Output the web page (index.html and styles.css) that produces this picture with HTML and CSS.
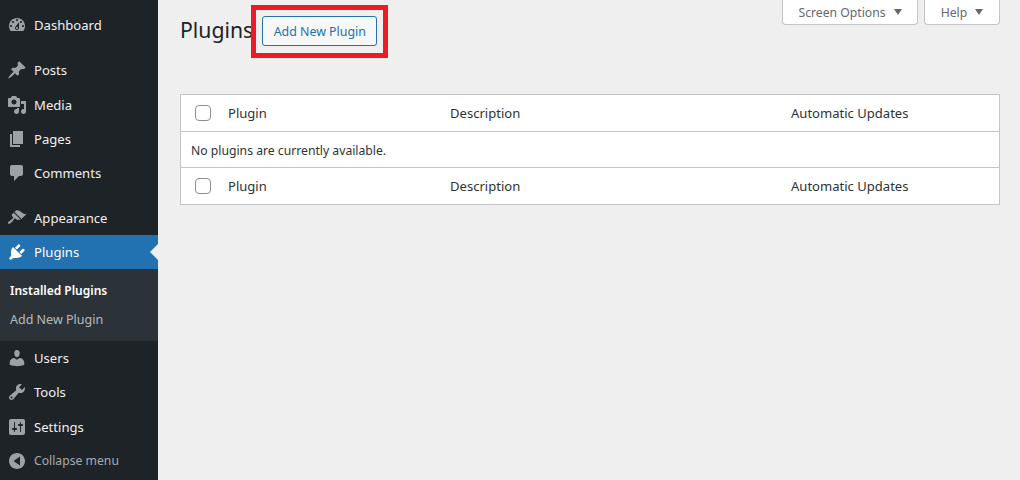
FILE: index.html
```html
<!DOCTYPE html>
<html lang="en">
<head>
    <meta charset="UTF-8">
    <meta name="viewport" content="width=device-width, initial-scale=1.0">
    <title>Plugins</title>
    <link rel="stylesheet" href="styles.css">
</head>
<body>
    <nav class="sidebar">
        <a class="menu-item"><svg class="menu-icon" viewBox="0 0 20 20"><path d="M3.76 16h12.48c1.1-1.37 1.76-3.11 1.76-5 0-4.42-3.58-8-8-8s-8 3.58-8 8c0 1.89.66 3.63 1.76 5zM10 4c.55 0 1 .45 1 1s-.45 1-1 1-1-.45-1-1 .45-1 1-1zM6 6c.55 0 1 .45 1 1s-.45 1-1 1-1-.45-1-1 .45-1 1-1zm8 0c.55 0 1 .45 1 1s-.45 1-1 1-1-.45-1-1 .45-1 1-1zm-5.37 5.55L12 7v6c0 1.1-.9 2-2 2s-2-.9-2-2c0-.57.24-1.08.63-1.45zM4 10c.55 0 1 .45 1 1s-.45 1-1 1-1-.45-1-1 .45-1 1-1zm12 0c.55 0 1 .45 1 1s-.45 1-1 1-1-.45-1-1 .45-1 1-1zm-5 3c0-.55-.45-1-1-1s-1 .45-1 1 .45 1 1 1 1-.45 1-1z"/></svg>Dashboard</a>
        <div class="menu-sep"></div>
        <a class="menu-item"><svg class="menu-icon" viewBox="0 0 20 20"><path d="M10.44 3.02l1.82-1.82 6.36 6.35-1.83 1.82c-1.05-.68-2.48-.57-3.41.36l-.75.75c-.92.93-1.04 2.35-.35 3.41l-1.83 1.82-2.41-2.41-2.8 2.79c-.42.42-3.38 2.71-3.8 2.29s1.86-3.39 2.28-3.81l2.79-2.79L4.1 9.36l1.83-1.82c1.05.69 2.48.57 3.4-.36l.75-.75c.93-.92 1.05-2.35.36-3.41z"/></svg>Posts</a>
        <a class="menu-item"><svg class="menu-icon" viewBox="0 0 20 20"><path d="M13 11V4c0-.55-.45-1-1-1h-1.67L9 1H5L3.67 3H2c-.55 0-1 .45-1 1v7c0 .55.45 1 1 1h10c.55 0 1-.45 1-1zM7 4.5c1.38 0 2.5 1.12 2.5 2.5S8.38 9.5 7 9.5 4.5 8.38 4.5 7 5.62 4.5 7 4.5zM14 6h5v10.5c0 1.38-1.12 2.5-2.5 2.5S14 17.88 14 16.5s1.12-2.5 2.5-2.5c.17 0 .34.02.5.05V9h-3V6zm-4 8.05V13h2v3.5c0 1.38-1.12 2.5-2.5 2.5S7 17.88 7 16.5 8.12 14 9.5 14c.17 0 .34.02.5.05z"/></svg>Media</a>
        <a class="menu-item"><svg class="menu-icon" viewBox="0 0 20 20"><path d="M6 15V2h10v13H6zm-1 1h8v2H3V5h2v11z"/></svg>Pages</a>
        <a class="menu-item"><svg class="menu-icon" viewBox="0 0 20 20"><path d="M5 2h9c1.1 0 2 .9 2 2v7c0 1.1-.9 2-2 2h-2l-5 5v-5H5c-1.1 0-2-.9-2-2V4c0-1.1.9-2 2-2z"/></svg>Comments</a>
        <div class="menu-sep second"></div>
        <a class="menu-item"><svg class="menu-icon" viewBox="0 0 20 20"><path d="M14.48 11.06L7.41 3.99l1.5-1.5c.5-.56 2.3-.47 3.51.32 1.21.8 1.43 1.28 2.91 2.1 1.18.64 2.45 1.26 4.45.85zm-.71.71L6.7 4.7 4.93 6.47c-.39.39-.39 1.02 0 1.41l1.06 1.06c.39.39.39 1.03 0 1.42-.6.6-1.43 1.11-2.21 1.69-.35.26-.7.53-1.01.84C1.43 13.23.4 14.93 1.1 15.63c.7.7 2.4-.33 3.74-1.67.31-.31.58-.66.85-1.01.58-.78 1.09-1.61 1.69-2.21.39-.39 1.02-.39 1.41 0l1.06 1.06c.39.39 1.02.39 1.41 0z"/></svg>Appearance</a>
        <a class="menu-item current"><svg class="menu-icon" viewBox="0 0 20 20"><path d="M13.11 4.36L9.87 7.6 8 5.73l3.24-3.24c.35-.34 1.05-.2 1.56.32.52.51.66 1.21.31 1.55zm-8 1.77l.91-1.12 9.01 9.01-1.19.84c-.71.71-2.63 1.16-3.82 1.16H6.14L4.9 17.26c-.59.59-1.54.59-2.12 0-.59-.58-.59-1.53 0-2.12l1.24-1.24v-3.88c0-1.13.4-3.19 1.09-3.89zm7.26 3.97l3.24-3.24c.34-.35 1.04-.21 1.55.31.52.51.66 1.21.31 1.55l-3.24 3.25z"/></svg>Plugins<span class="current-arrow"></span></a>
        <div class="submenu">
            <a class="submenu-item active">Installed Plugins</a>
            <a class="submenu-item">Add New Plugin</a>
        </div>
        <a class="menu-item"><svg class="menu-icon" viewBox="0 0 20 20"><path d="M10 9.25c-2.27 0-2.73-3.44-2.73-3.44C7 4.02 7.82 2 9.97 2c2.16 0 2.98 2.02 2.71 3.81 0 0-.41 3.44-2.68 3.44zm0 2.57L12.72 10c2.39 0 4.52 2.33 4.52 4.53v2.49s-3.65 1.13-7.24 1.13c-3.65 0-7.24-1.13-7.24-1.13v-2.49c0-2.25 1.94-4.48 4.47-4.48z"/></svg>Users</a>
        <a class="menu-item"><svg class="menu-icon" viewBox="0 0 20 20"><path d="M16.68 9.77c-1.34 1.34-3.3 1.67-4.95.99l-5.41 6.52c-.99.99-2.59.99-3.58 0s-.99-2.59 0-3.57l6.52-5.42c-.68-1.65-.35-3.61.99-4.95 1.28-1.28 3.12-1.62 4.72-1.06l-2.89 2.89 2.82 2.82 2.86-2.87c.53 1.58.18 3.39-1.08 4.65zM3.81 16.21c.4.39 1.04.39 1.43 0 .4-.4.4-1.04 0-1.43-.39-.4-1.03-.4-1.43 0-.39.39-.39 1.03 0 1.43z"/></svg>Tools</a>
        <a class="menu-item"><svg class="menu-icon" viewBox="0 0 20 20"><path d="M18 16V4c0-1.1-.9-2-2-2H4c-1.1 0-2 .9-2 2v12c0 1.1.9 2 2 2h12c1.1 0 2-.9 2-2zM8 11h1c.55 0 1 .45 1 1s-.45 1-1 1H8v1.5c0 .28-.22.5-.5.5s-.5-.22-.5-.5V13H6c-.55 0-1-.45-1-1s.45-1 1-1h1V5.5c0-.28.22-.5.5-.5s.5.22.5.5V11zm5-2h-1c-.55 0-1-.45-1-1s.45-1 1-1h1V5.5c0-.28.22-.5.5-.5s.5.22.5.5V7h1c.55 0 1 .45 1 1s-.45 1-1 1h-1v5.5c0 .28-.22.5-.5.5s-.5-.22-.5-.5V9z"/></svg>Settings</a>
        <a class="menu-item collapse"><svg class="menu-icon" viewBox="0 0 20 20"><path d="M18 10c0-4.42-3.58-8-8-8s-8 3.58-8 8 3.58 8 8 8 8-3.58 8-8zm-5-4.5v9L6.5 10z"/></svg>Collapse menu</a>
    </nav>

    <main class="content">
        <header class="page-head">
            <h1 class="page-title">Plugins</h1>
            <a class="add-button">Add New Plugin<span class="highlight"></span></a>
            <div class="screen-meta">
                <button class="meta-tab tab-options">Screen Options<span class="caret"></span></button>
                <button class="meta-tab tab-help">Help<span class="caret"></span></button>
            </div>
        </header>

        <table class="plugin-table">
            <thead>
                <tr>
                    <th class="col-check"><span class="checkbox"></span></th>
                    <th class="col-plugin">Plugin</th>
                    <th class="col-desc">Description</th>
                    <th>Automatic Updates</th>
                </tr>
            </thead>
            <tbody>
                <tr>
                    <td colspan="4" class="empty">No plugins are currently available.</td>
                </tr>
            </tbody>
            <tfoot>
                <tr>
                    <th class="col-check"><span class="checkbox"></span></th>
                    <th class="col-plugin">Plugin</th>
                    <th class="col-desc">Description</th>
                    <th>Automatic Updates</th>
                </tr>
            </tfoot>
        </table>
    </main>
</body>
</html>
```

FILE: styles.css
```css
* {
    box-sizing: border-box;
}

html, body {
    height: 100%;
}

body {
    margin: 0;
    display: flex;
    overflow: hidden;
    background-color: #efefef;
    color: #3c434a;
    font-family: "Noto Sans", "Open Sans", sans-serif;
    font-size: 13px;
}

/* left menu */
.sidebar {
    width: 158px;
    flex-shrink: 0;
    padding-top: 8px;
    background-color: #1d2327;
}

.menu-item {
    display: flex;
    align-items: center;
    height: 34.3px;
    padding-left: 7px;
    color: #f0f0f1;
    font-size: 13.1px;
}

.menu-icon {
    width: 20px;
    height: 20px;
    margin-right: 7px;
    flex-shrink: 0;
    fill: #9ca2a7;
}

.menu-sep {
    height: 11px;
}

.menu-sep.second {
    height: 10.4px;
}

.menu-item.current {
    background-color: #2271b1;
    color: #fff;
}

.menu-item.current .menu-icon {
    fill: #fff;
}

.current-arrow {
    margin-left: auto;
    border: 8px solid transparent;
    border-right-color: #efefef;
    border-left-width: 0;
}

.submenu {
    height: 71.3px;
    padding-top: 7px;
    background-color: #2c3338;
}

.submenu-item {
    display: flex;
    align-items: center;
    height: 29px;
    padding-left: 10px;
    color: rgba(240, 246, 252, 0.7);
    font-size: 12.5px;
}

.submenu-item.active {
    color: #fff;
    font-size: 12px;
    font-weight: 600;
}

.menu-item.collapse {
    color: #a7aaad;
    font-size: 12.2px;
}

/* page */
.content {
    flex: 1;
    padding: 0 20px 0 22px;
}

.page-head {
    display: flex;
    align-items: flex-start;
    height: 94px;
}

.page-title {
    margin: 15px 9px 0 0;
    color: #1d2327;
    font-size: 21.2px;
    font-weight: 400;
    line-height: 30px;
}

.add-button {
    position: relative;
    display: flex;
    align-items: center;
    height: 30px;
    margin-top: 16px;
    padding: 0 10.5px;
    border: 1px solid #2271b1;
    border-radius: 3px;
    background-color: #f6f7f7;
    color: #2271b1;
    font-size: 12.4px;
}

/* red annotation round the button */
.highlight {
    position: absolute;
    left: -12px;
    right: -12px;
    top: -12px;
    bottom: -13px;
    border: 5px solid #ed1c24;
}

.screen-meta {
    display: flex;
    gap: 6px;
    margin-left: auto;
}

.meta-tab {
    display: flex;
    align-items: center;
    justify-content: center;
    height: 25px;
    border: 1px solid #c3c4c7;
    border-top: none;
    border-radius: 0 0 4px 4px;
    background-color: #fff;
    color: #646970;
    font-family: inherit;
    font-size: 12.2px;
    padding: 0;
}

.tab-options {
    width: 136px;
}

.tab-help {
    width: 76px;
}

.caret {
    margin-left: 8px;
    border-style: solid;
    border-width: 6px 4.5px 0;
    border-color: #646970 transparent transparent;
}

/* plugin list */
.plugin-table {
    width: 100%;
    table-layout: fixed;
    border-collapse: separate;
    border-spacing: 0;
    border: 1px solid #c3c4c7;
    background-color: #fff;
}

.plugin-table th {
    height: 36px;
    padding: 0 0 0 10px;
    color: #2c3338;
    font-size: 13.05px;
    font-weight: 400;
    text-align: left;
}

.plugin-table thead th {
    border-bottom: 1px solid #c3c4c7;
    height: 37px;
}

.plugin-table tfoot th {
    border-top: 1px solid #c3c4c7;
    height: 37px;
}

.plugin-table th.col-check {
    width: 37px;
    padding: 0 0 0 14px;
}

.plugin-table th.col-plugin {
    width: 222px;
}

.plugin-table th.col-desc {
    width: 341px;
}

.checkbox {
    display: block;
    width: 16px;
    height: 16px;
    border: 1px solid #8c8f94;
    border-radius: 4px;
    background-color: #fff;
}

.empty {
    height: 35px;
    padding: 2px 0 0 10px;
    color: #2c3338;
    font-size: 12.2px;
}
```
